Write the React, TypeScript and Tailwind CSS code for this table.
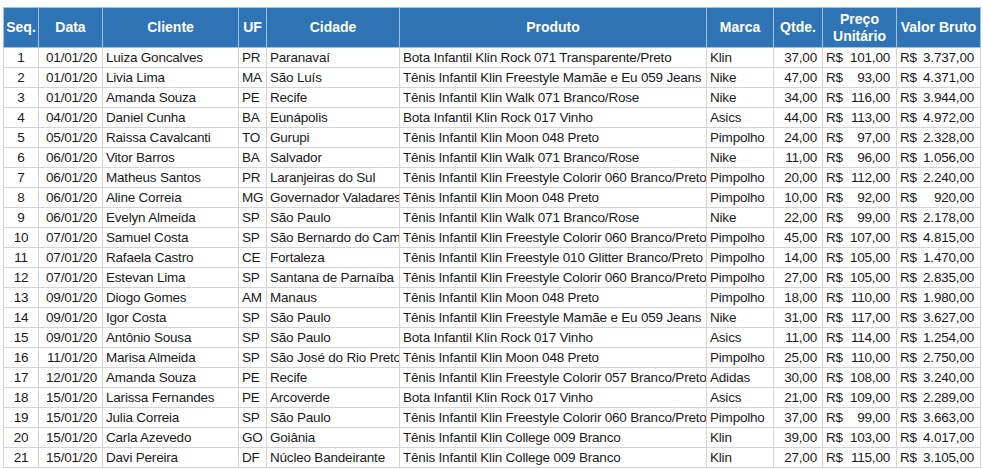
import React from "react";

type Row = [number, string, string, string, string, string, string, string, string, string];

const rows: Row[] = [
  [1, "01/01/20", "Luiza Goncalves", "PR", "Paranavaí", "Bota Infantil Klin Rock 071 Transparente/Preto", "Klin", "37,00", "101,00", "3.737,00"],
  [2, "01/01/20", "Livia Lima", "MA", "São Luís", "Tênis Infantil Klin Freestyle Mamãe e Eu 059 Jeans", "Nike", "47,00", "93,00", "4.371,00"],
  [3, "01/01/20", "Amanda Souza", "PE", "Recife", "Tênis Infantil Klin Walk 071 Branco/Rose", "Nike", "34,00", "116,00", "3.944,00"],
  [4, "04/01/20", "Daniel Cunha", "BA", "Eunápolis", "Bota Infantil Klin Rock 017 Vinho", "Asics", "44,00", "113,00", "4.972,00"],
  [5, "05/01/20", "Raissa Cavalcanti", "TO", "Gurupi", "Tênis Infantil Klin Moon 048 Preto", "Pimpolho", "24,00", "97,00", "2.328,00"],
  [6, "06/01/20", "Vitor Barros", "BA", "Salvador", "Tênis Infantil Klin Walk 071 Branco/Rose", "Nike", "11,00", "96,00", "1.056,00"],
  [7, "06/01/20", "Matheus Santos", "PR", "Laranjeiras do Sul", "Tênis Infantil Klin Freestyle Colorir 060 Branco/Preto", "Pimpolho", "20,00", "112,00", "2.240,00"],
  [8, "06/01/20", "Aline Correia", "MG", "Governador Valadares", "Tênis Infantil Klin Moon 048 Preto", "Pimpolho", "10,00", "92,00", "920,00"],
  [9, "06/01/20", "Evelyn Almeida", "SP", "São Paulo", "Tênis Infantil Klin Walk 071 Branco/Rose", "Nike", "22,00", "99,00", "2.178,00"],
  [10, "07/01/20", "Samuel Costa", "SP", "São Bernardo do Campo", "Tênis Infantil Klin Freestyle Colorir 060 Branco/Preto", "Pimpolho", "45,00", "107,00", "4.815,00"],
  [11, "07/01/20", "Rafaela Castro", "CE", "Fortaleza", "Tênis Infantil Klin Freestyle 010 Glitter Branco/Preto", "Pimpolho", "14,00", "105,00", "1.470,00"],
  [12, "07/01/20", "Estevan Lima", "SP", "Santana de Parnaíba", "Tênis Infantil Klin Freestyle Colorir 060 Branco/Preto", "Pimpolho", "27,00", "105,00", "2.835,00"],
  [13, "09/01/20", "Diogo Gomes", "AM", "Manaus", "Tênis Infantil Klin Moon 048 Preto", "Pimpolho", "18,00", "110,00", "1.980,00"],
  [14, "09/01/20", "Igor Costa", "SP", "São Paulo", "Tênis Infantil Klin Freestyle Mamãe e Eu 059 Jeans", "Nike", "31,00", "117,00", "3.627,00"],
  [15, "09/01/20", "Antônio Sousa", "SP", "São Paulo", "Bota Infantil Klin Rock 017 Vinho", "Asics", "11,00", "114,00", "1.254,00"],
  [16, "11/01/20", "Marisa Almeida", "SP", "São José do Rio Preto", "Tênis Infantil Klin Moon 048 Preto", "Pimpolho", "25,00", "110,00", "2.750,00"],
  [17, "12/01/20", "Amanda Souza", "PE", "Recife", "Tênis Infantil Klin Freestyle Colorir 057 Branco/Preto", "Adidas", "30,00", "108,00", "3.240,00"],
  [18, "15/01/20", "Larissa Fernandes", "PE", "Arcoverde", "Bota Infantil Klin Rock 017 Vinho", "Asics", "21,00", "109,00", "2.289,00"],
  [19, "15/01/20", "Julia Correia", "SP", "São Paulo", "Tênis Infantil Klin Freestyle Colorir 060 Branco/Preto", "Pimpolho", "37,00", "99,00", "3.663,00"],
  [20, "15/01/20", "Carla Azevedo", "GO", "Goiânia", "Tênis Infantil Klin College 009 Branco", "Klin", "39,00", "103,00", "4.017,00"],
  [21, "15/01/20", "Davi Pereira", "DF", "Núcleo Bandeirante", "Tênis Infantil Klin College 009 Branco", "Klin", "27,00", "115,00", "3.105,00"],
];

const widths = [35, 64, 136, 28, 133, 307, 67, 49, 74, 84];

const th = "border border-[#9dc3e6] bg-[#2f75b5] text-white font-bold text-[14px] leading-[17px] text-center p-0";
const td = "border border-[#d4d4d4] h-[20px] p-0 text-[13.5px] tracking-[-0.2px] leading-[19px] text-[#1a1a1a]";

function Money({ value }: { value: string }) {
  return (
    <div className="flex justify-between pl-[3px] pr-[6px]">
      <span>R$</span>
      <span>{value}</span>
    </div>
  );
}

function Clip({ children }: { children: React.ReactNode }) {
  return <div className="overflow-hidden whitespace-nowrap pl-[3px]">{children}</div>;
}

export default function App() {
  return (
    <div className="bg-white w-[983px] h-[469px] overflow-hidden pt-[7px] pl-[3px] font-['Liberation_Sans',Arial,sans-serif]">
      <table className="table-fixed border-collapse w-[977px]">
        <colgroup>
          {widths.map((w, i) => (
            <col key={i} style={{ width: w }} />
          ))}
        </colgroup>
        <thead>
          <tr className="h-[40px]">
            <th className={th}>Seq.</th>
            <th className={th}>Data</th>
            <th className={th}>Cliente</th>
            <th className={th}>UF</th>
            <th className={th}>Cidade</th>
            <th className={th}>Produto</th>
            <th className={th}>Marca</th>
            <th className={th}>Qtde.</th>
            <th className={th}>
              Preço
              <br />
              Unitário
            </th>
            <th className={th}>Valor Bruto</th>
          </tr>
        </thead>
        <tbody>
          {rows.map((r) => (
            <tr key={r[0]}>
              <td className={`${td} text-center`}>{r[0]}</td>
              <td className={`${td} text-right pr-[5px]`}>{r[1]}</td>
              <td className={td}>
                <Clip>{r[2]}</Clip>
              </td>
              <td className={td}>
                <Clip>{r[3]}</Clip>
              </td>
              <td className={td}>
                <Clip>{r[4]}</Clip>
              </td>
              <td className={td}>
                <Clip>{r[5]}</Clip>
              </td>
              <td className={td}>
                <Clip>{r[6]}</Clip>
              </td>
              <td className={`${td} text-right pr-[5px]`}>{r[7]}</td>
              <td className={td}>
                <Money value={r[8]} />
              </td>
              <td className={td}>
                <Money value={r[9]} />
              </td>
            </tr>
          ))}
        </tbody>
      </table>
    </div>
  );
}
